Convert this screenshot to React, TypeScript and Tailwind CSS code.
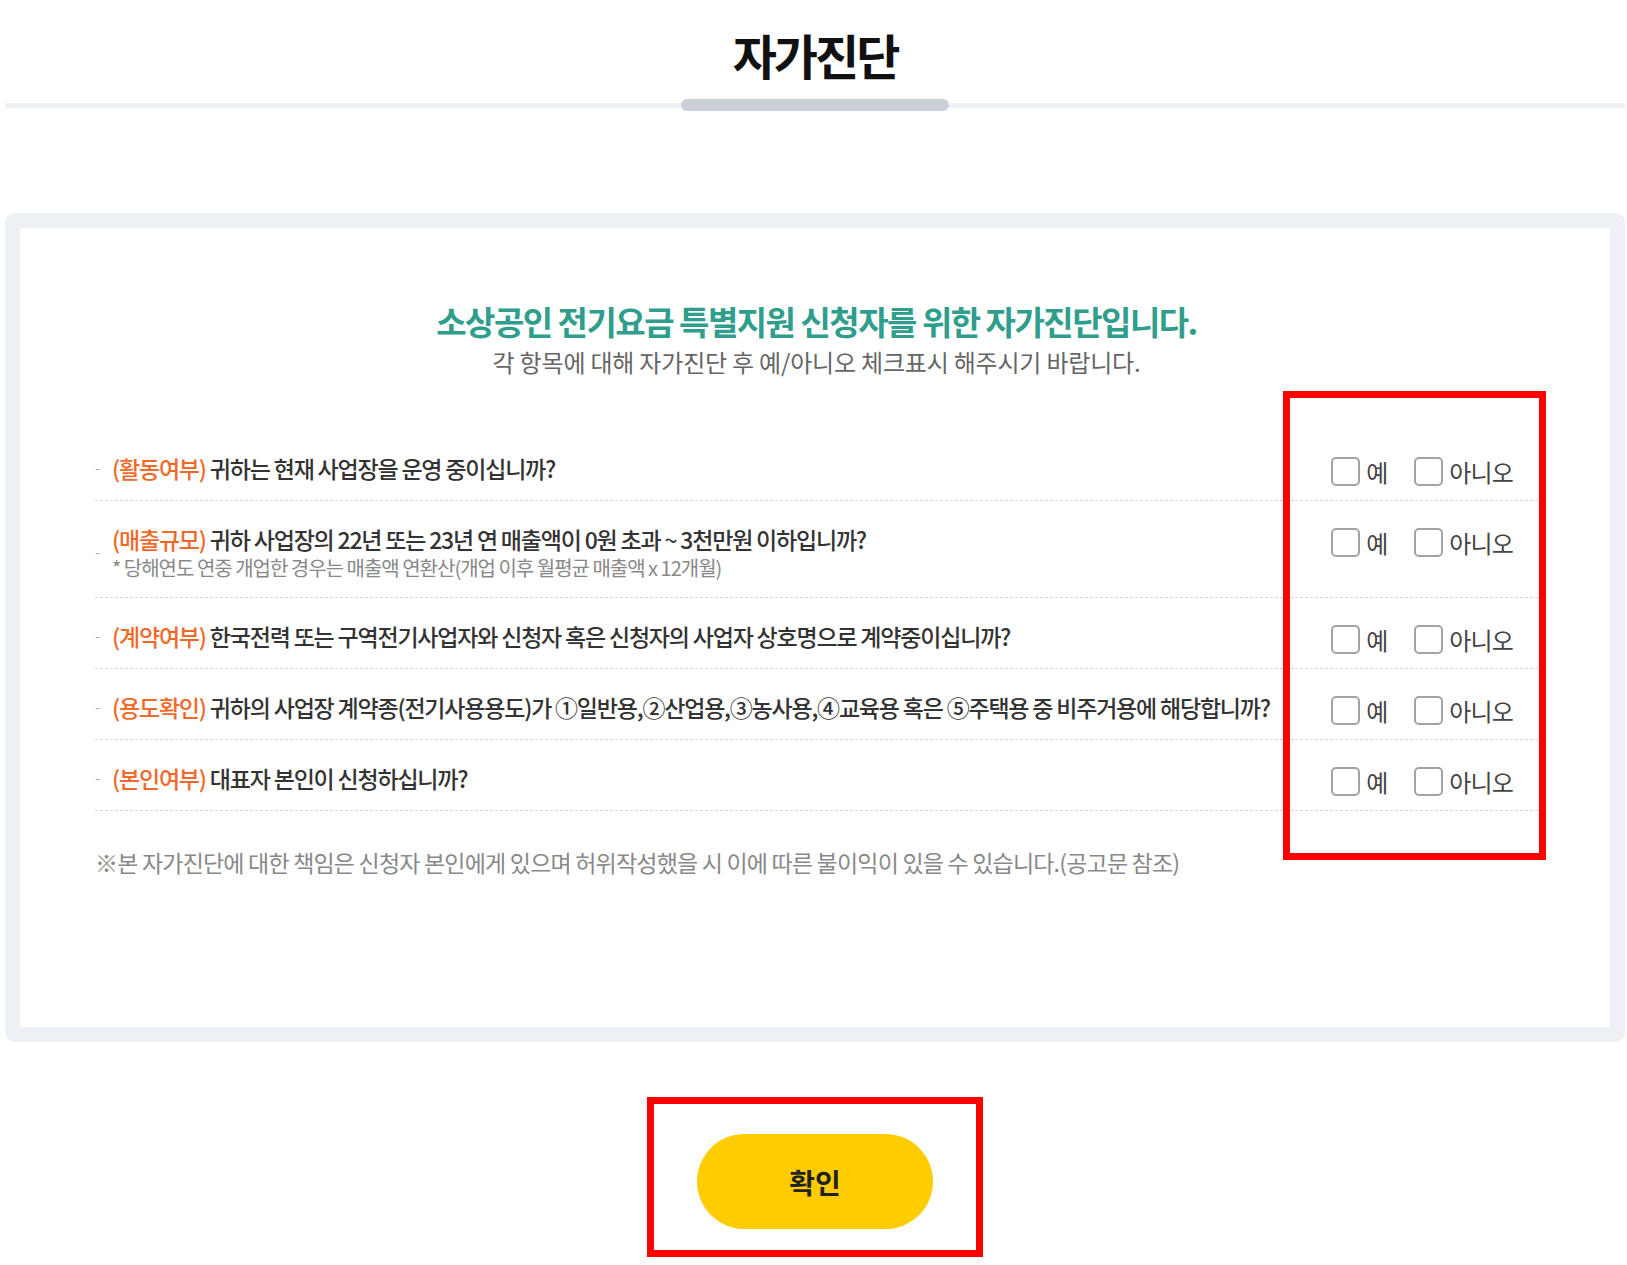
import React from 'react';

const questions = [
  { label: '(활동여부)', text: '귀하는 현재 사업장을 운영 중이십니까?' },
  {
    label: '(매출규모)',
    text: '귀하 사업장의 22년 또는 23년 연 매출액이 0원 초과 ~ 3천만원 이하입니까?',
    note: '* 당해연도 연중 개업한 경우는 매출액 연환산(개업 이후 월평균 매출액 x 12개월)',
  },
  { label: '(계약여부)', text: '한국전력 또는 구역전기사업자와 신청자 혹은 신청자의 사업자 상호명으로 계약중이십니까?' },
  {
    label: '(용도확인)',
    text: '귀하의 사업장 계약종(전기사용용도)가 ①일반용,②산업용,③농사용,④교육용 혹은 ⑤주택용 중 비주거용에 해당합니까?',
  },
  { label: '(본인여부)', text: '대표자 본인이 신청하십니까?' },
];

function Box() {
  return <span className="block w-[29px] h-[29px] rounded-[5px] border-2 border-[#a3a3a3] bg-white" />;
}

function Choices() {
  return (
    <div className="ml-auto mr-[25px] mt-[4px] -mb-[3px] flex items-center h-[29px] text-[24px] tracking-[-0.8px] text-[#444]">
      <label className="flex items-center gap-[6px] w-[83px]">
        <Box />
        <span className="leading-none">예</span>
      </label>
      <label className="flex items-center gap-[6px]">
        <Box />
        <span className="leading-none">아니오</span>
      </label>
    </div>
  );
}

export default function App() {
  return (
    <div
      className="w-full min-h-screen bg-white pl-[5px] pr-[2px] pb-[9px]"
      style={{ fontFamily: '"Noto Sans CJK KR", "Noto Sans", sans-serif' }}
    >
      {/* Page title */}
      <h1 className="mt-[22px] h-[64px] leading-[64px] text-center text-[48px] font-bold tracking-[-3px] text-[#111]">
        자가진단
      </h1>
      <div className="mt-[13px] flex items-center h-[12px]">
        <div className="flex-1 h-[5px] bg-[#eef1f5]" />
        <div className="w-[268px] h-[12px] rounded-full bg-[#c9ced8]" />
        <div className="flex-1 h-[5px] bg-[#eef1f5]" />
      </div>

      {/* Self check card */}
      <div className="relative mt-[102px] border-[15px] border-[#edf1f6] rounded-[10px] bg-white pl-[75px] pr-[72px] pt-[73px] pb-[151px]">
        <div className="text-center">
          <h2 className="text-[33px] leading-[40px] font-bold tracking-[-1.5px] text-[#2f9e8c]">
            소상공인 전기요금 특별지원 신청자를 위한 자가진단입니다.
          </h2>
          <p className="mt-[7px] text-[24px] leading-[28px] tracking-[-0.2px] text-[#666]">
            각 항목에 대해 자가진단 후 예/아니오 체크표시 해주시기 바랍니다.
          </p>
        </div>

        <ul className="mt-[54px]">
          {questions.map((q) => (
            <li key={q.label} className="flex items-start border-b border-dashed border-[#d6d6d6] pt-[23px] pb-[17px]">
              <div className="flex items-center">
                <span className="w-[17px] text-[15px] text-[#aaa]">-</span>
                <div>
                  <p className="text-[23px] leading-[30px] font-medium tracking-[-1.2px] text-[#333] whitespace-nowrap">
                    <span className="text-[#f0692a]">{q.label}</span> {q.text}
                  </p>
                  {q.note && (
                    <p className="mt-[2px] text-[20px] leading-[24px] tracking-[-1px] text-[#888] whitespace-nowrap">
                      {q.note}
                    </p>
                  )}
                </div>
              </div>
              <Choices />
            </li>
          ))}
        </ul>

        <p className="mt-[37px] text-[23px] leading-[28px] tracking-[-0.8px] text-[#888]">
          ※본 자가진단에 대한 책임은 신청자 본인에게 있으며 허위작성했을 시 이에 따른 불이익이 있을 수 있습니다.(공고문 참조)
        </p>

        {/* annotation highlight */}
        <div className="absolute left-[1263px] top-[163px] w-[263px] h-[469px] border-[7px] border-[#ff0000] pointer-events-none" />
      </div>

      {/* Confirm button */}
      <div className="mt-[55px] flex justify-center">
        <div className="border-[7px] border-[#ff0000] px-[43px] pt-[30px] pb-[21px]">
          <button className="w-[236px] h-[95px] rounded-full bg-[#ffcc00] text-[28px] font-bold text-[#222]">
            확인
          </button>
        </div>
      </div>
    </div>
  );
}
